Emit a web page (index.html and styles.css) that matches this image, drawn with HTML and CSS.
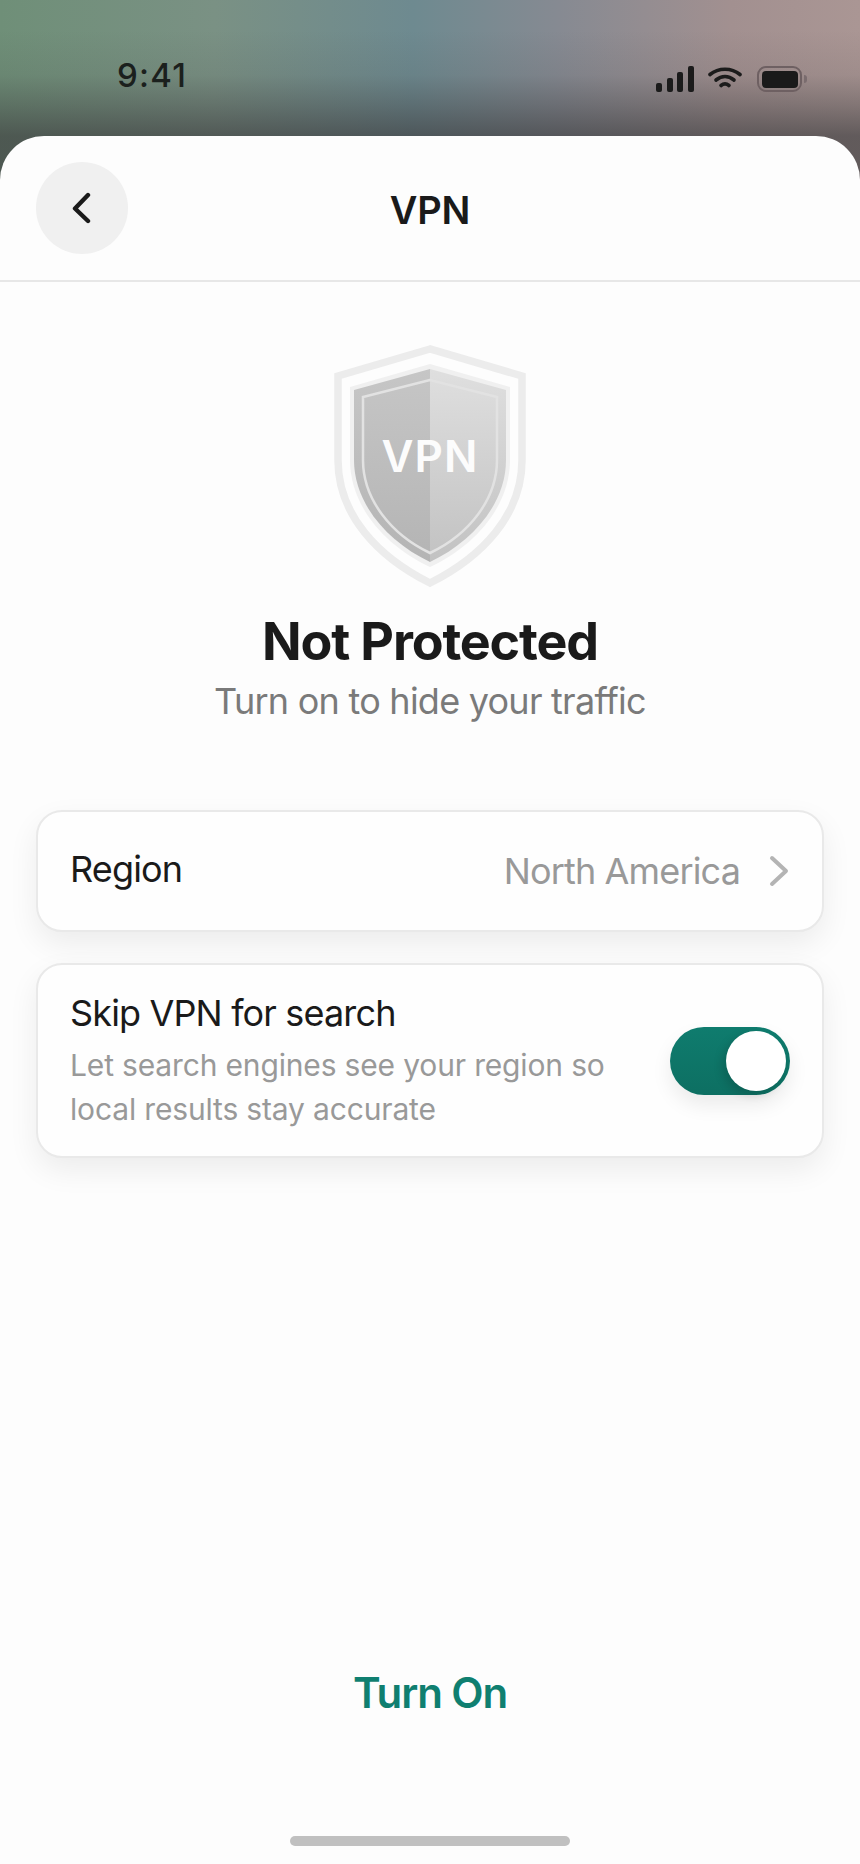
FILE: index.html
```html
<!DOCTYPE html>
<html lang="en">
<head>
<meta charset="utf-8">
<title>VPN</title>
<link rel="stylesheet" href="styles.css">
</head>
<body>
<div class="screen">
  <div class="status">
    <span class="time">9:41</span>
    <div class="status-icons">
      <svg class="signal" width="38" height="26" viewBox="0 0 38 26"><rect x="0" y="17" width="6" height="9" rx="2"/><rect x="11" y="12" width="6" height="14" rx="2"/><rect x="21" y="6" width="6" height="20" rx="2"/><rect x="32" y="0" width="6" height="26" rx="2"/></svg>
      <svg class="wifi" width="34" height="22" viewBox="0 0 34 22"><path d="M2 7.5C10.5 0.5 23.5 0.5 32 7.5"/><path d="M8 13C13.5 8.5 20.5 8.5 26 13"/><path d="M13 18.5C15.5 16.5 18.5 16.5 21 18.5"/></svg>
      <div class="battery"><div class="battery-level"></div></div>
      <div class="battery-cap"></div>
    </div>
  </div>
  <main class="sheet">
    <header class="nav">
      <button class="back" aria-label="Back">
        <svg width="22" height="32" viewBox="0 0 22 32"><path d="M18 3L5 16.5L18 29"/></svg>
      </button>
      <h1 class="nav-title">VPN</h1>
    </header>
    <section class="hero">
      <svg class="shield" width="260" height="270" viewBox="0 0 260 270">
        <defs>
          <linearGradient id="shieldLeft" x1="0" y1="0" x2="0" y2="1"><stop offset="0" stop-color="#c6c6c6"/><stop offset="1" stop-color="#b4b4b4"/></linearGradient>
          <linearGradient id="shieldRight" x1="0" y1="0" x2="0" y2="1"><stop offset="0" stop-color="#dfdfdf"/><stop offset="1" stop-color="#c2c2c2"/></linearGradient>
        </defs>
        <path class="band-outer" d="M130 19L38 46V130C38 185 78 227 130 253C182 227 222 185 222 130V46Z"/>
        <path class="band-inner" d="M130 34L50 57V130C50 176 85 216 130 237C175 216 210 176 210 130V57Z"/>
        <path fill="url(#shieldLeft)" d="M130 39L54 60V130C54 174 88 212 130 232Z"/>
        <path fill="url(#shieldRight)" d="M130 39L206 60V130C206 174 172 212 130 232Z"/>
        <path class="shield-line" d="M130 50L63 67V130C63 170 92 205 130 223C168 205 197 170 197 130V67Z"/>
        <text class="shield-text" x="130" y="142" text-anchor="middle">VPN</text>
      </svg>
      <h2 class="hero-title">Not Protected</h2>
      <p class="hero-sub">Turn on to hide your traffic</p>
    </section>
    <section class="cards">
      <div class="card card-region">
        <span class="card-label">Region</span>
        <span class="card-value">North America</span>
        <svg class="chevron" width="20" height="32" viewBox="0 0 20 32"><path d="M3 3L17 16L3 29"/></svg>
      </div>
      <div class="card card-skip">
        <div class="skip-text">
          <div class="card-label">Skip VPN for search</div>
          <p class="card-desc">Let search engines see your region so local results stay accurate</p>
        </div>
        <div class="toggle"><div class="knob"></div></div>
      </div>
    </section>
    <button class="turn-on">Turn On</button>
    <div class="home"></div>
  </main>
</div>
</body>
</html>
```
FILE: styles.css
```css
* { box-sizing: border-box; }
html, body { margin: 0; padding: 0; }
body { width: 860px; height: 1864px; overflow: hidden; font-family: Inter, "Liberation Sans", sans-serif; background: #fdfdfd; }
.screen {
  width: 860px; height: 1864px; display: flex; flex-direction: column;
  background:
    linear-gradient(180deg, rgba(60,60,62,0) 30px, rgba(60,60,62,.1) 75px, rgba(60,60,62,.36) 105px, rgba(60,60,62,.66) 136px),
    linear-gradient(90deg, #6f8f78 0%, #7a9184 25%, #6e8a90 48%, #868a92 65%, #a29090 85%, #aa9694 100%);
}
.status { height: 136px; flex: none; display: flex; justify-content: space-between; padding: 58px 0 0 117px; }
.time { font-size: 33px; line-height: 34px; height: 34px; font-weight: 500; color: #1b201d; letter-spacing: 1.2px; }
.status-icons { display: flex; align-items: flex-start; padding: 8px 53px 0 0; }
.signal { fill: #1b1b1b; margin-right: 14px; }
.wifi { margin-top: 1px; margin-right: 15px; fill: none; stroke: #1b1b1b; stroke-width: 3.6px; stroke-linecap: round; }
.battery { width: 45px; height: 26px; border: 2.5px solid #6e6062; border-radius: 9px; padding: 2.5px; }
.battery-level { width: 100%; height: 100%; background: #1a1a1a; border-radius: 4px; }
.battery-cap { width: 3px; height: 8px; margin: 9px 0 0 2px; background: #7a6c6e; border-radius: 0 3px 3px 0; }
.sheet { flex: 1; display: flex; flex-direction: column; align-items: stretch; background: #fdfdfd; border-radius: 44px 44px 0 0; }
.nav { position: relative; height: 146px; flex: none; display: flex; align-items: center; justify-content: center; border-bottom: 2px solid #e7e7e7; }
.back { position: absolute; left: 36px; top: 26px; width: 92px; height: 92px; border: 0; padding: 0; border-radius: 50%; background: #f0f0f0; display: flex; align-items: center; justify-content: center; }
.back svg { margin-right: 2px; fill: none; stroke: #1a1a1a; stroke-width: 4.4px; stroke-linecap: round; stroke-linejoin: round; }
.nav-title { margin: 4px 0 0; font-size: 38px; line-height: 46px; font-weight: 600; letter-spacing: -0.2px; color: #1a1a1a; }
.hero { display: flex; flex-direction: column; align-items: center; padding-top: 48px; }
.shield { display: block; }
.band-outer { fill: none; stroke: #ececec; stroke-width: 7.5px; }
.band-inner { fill: #f0f0f0; }
.shield-line { fill: none; stroke: #e2e2e2; stroke-width: 2.5px; }
.shield-text { font-family: Inter, "Liberation Sans", sans-serif; font-size: 44px; font-weight: 600; fill: #fcfcfc; letter-spacing: 1px; }
.hero-title { margin: 11px 0 0; font-size: 52px; line-height: 62px; font-weight: 700; letter-spacing: -1.15px; color: #1a1a1a; }
.hero-sub { margin: 4px 0 0; font-size: 36px; line-height: 48px; color: #7a7a7a; letter-spacing: -0.75px; }
.cards { display: flex; flex-direction: column; gap: 31px; padding: 0 36px; margin-top: 85px; }
.card { background: #fefefe; border: 2px solid #e9e9e9; border-radius: 26px; box-shadow: 0 12px 30px rgba(0,0,0,.07); display: flex; align-items: center; }
.card-region { height: 122px; padding: 0 33px 0 32px; }
.card-region .card-label { padding-bottom: 4px; }
.card-label { font-size: 36px; line-height: 44px; color: #1a1a1a; letter-spacing: -0.85px; }
.card-value { margin-left: auto; font-size: 36px; line-height: 46px; color: #999999; letter-spacing: -0.85px; margin-right: 29px; }
.chevron { fill: none; stroke: #b4b4b4; stroke-width: 4px; stroke-linecap: round; stroke-linejoin: round; }
.card-skip { height: 195px; padding: 26px 32px 0 32px; justify-content: space-between; align-items: flex-start; }
.skip-text { width: 560px; }
.card-desc { margin: 8px 0 0; font-size: 30px; line-height: 44px; color: #999999; letter-spacing: -0.16px; }
.toggle { align-self: center; margin-top: -26px; width: 120px; height: 68px; border-radius: 34px; background: linear-gradient(180deg, #0f7c6e, #0d6f62); padding: 4px; display: flex; justify-content: flex-end; box-shadow: 0 10px 20px rgba(0,0,0,.08); }
.knob { width: 60px; height: 60px; border-radius: 50%; background: #fff; box-shadow: -4px 4px 10px rgba(0,0,0,.14); }
.turn-on { align-self: center; margin-top: auto; border: 0; padding: 0; background: none; font-family: inherit; font-size: 42px; line-height: 50px; font-weight: 600; letter-spacing: -1.1px; color: #0f7f70; }
.home { align-self: center; width: 280px; height: 10px; margin: 118px 0 18px; border-radius: 5px; background: #c0c0c0; }
```
